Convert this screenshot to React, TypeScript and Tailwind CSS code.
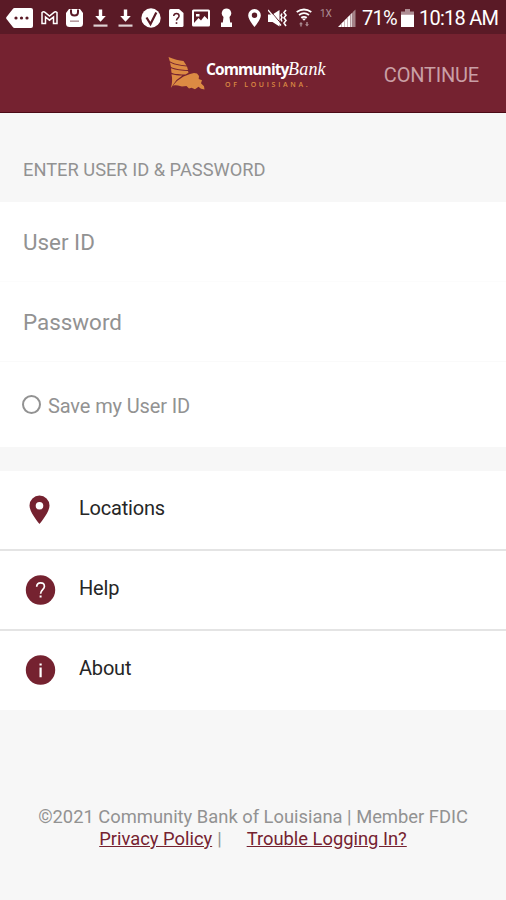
import type { ReactNode } from "react";

type GlyphProps = {
  width: number;
  className?: string;
  children: ReactNode;
};

// Every status glyph is 20px tall, only the width differs
function Glyph({ width, className = "", children }: GlyphProps) {
  return (
    <svg
      width={width}
      height={20}
      viewBox={`0 0 ${width} 20`}
      fill="#fff"
      className={`shrink-0 ${className}`}
    >
      {children}
    </svg>
  );
}

function DownloadGlyph({ className }: { className?: string }) {
  return (
    <Glyph width={15} className={className}>
      <path d="M5.8 1.5h3.4V8h3.6l-5.3 5.8L2.2 8h3.6z" />
      <path d="M.5 16.5h14v2.2H.5z" opacity=".8" />
    </Glyph>
  );
}

function StatusBar() {
  return (
    <div className="flex h-[34px] shrink-0 items-center bg-[#5a1a26] pt-px pl-1.5 text-white">
      <Glyph width={27}>
        <path d="M8.5 0H25q2 0 2 2v16q0 2-2 2H8.5q-1 0-1.7-1L.5 11q-.7-1 0-2L6.8 1Q7.5 0 8.5 0z" />
        <g fill="#5a1a26">
          <circle cx="10" cy="10" r="1.6" />
          <circle cx="15.5" cy="10" r="1.6" />
          <circle cx="21" cy="10" r="1.6" />
        </g>
      </Glyph>
      <Glyph width={17} className="ml-2">
        <path
          d="M1 4.5v11h3.5V9l4 3.2 4-3.2v6.5H16v-11q-1.5-1.3-3-.2L8.5 8 4 4.3q-1.5-1.1-3 .2z"
          fill="none"
          stroke="#fff"
          strokeWidth="1.5"
        />
      </Glyph>
      <Glyph width={17} className="ml-2">
        <path d="M3 1h11l3 4V15.5q0 3.5-3.5 3.5h-10Q0 19 0 15.5V5z" />
        <path
          d="M5 1.5V4q0 3.5 3.5 3.5T12 4V1.5"
          fill="none"
          stroke="#5a1a26"
          strokeWidth="2"
        />
        <path d="M4 12.5h9v1.3H4z" fill="#5a1a26" opacity=".55" />
      </Glyph>
      <DownloadGlyph className="ml-2.5" />
      <DownloadGlyph className="ml-2.5" />
      <Glyph width={20} className="ml-2">
        <circle cx="10" cy="10" r="9.7" />
        <path
          d="m5.5 9.5 4 6.5 5.8-11.5"
          fill="none"
          stroke="#5a1a26"
          strokeWidth="2.2"
        />
      </Glyph>
      <Glyph width={15} className="ml-2">
        <path d="M1.5 1H10l4.500 4v12.500q0 1.500-1.500 1.500H1.500Q0 19 0 17.500V2.500Q0 1 1.500 1z" />
        <path
          d="M4.700 8q.3-2.500 2.800-2.500T10.100 8c0 2-2.600 2.200-2.600 4.500"
          fill="none"
          stroke="#5a1a26"
          strokeWidth="1.5"
        />
        <path d="M6.700 14.200h1.600v1.700H6.700z" fill="#5a1a26" />
      </Glyph>
      <Glyph width={18} className="ml-2">
        <path
          fillRule="evenodd"
          d="M1.500 1.500h15Q18 1.500 18 3v14q0 1.500-1.500 1.500h-15Q0 18.500 0 17V3Q0 1.500 1.500 1.500zM2 3.500V15l4.500-5L9 12.500 12.500 8 16 11.500v-8z"
        />
        <path d="M4 6h3.500v2.500H4z" />
      </Glyph>
      <Glyph width={11} className="ml-[11px]">
        <path d="M5.500.5a4.800 4.800 0 0 1 3 8.500l.7 5.500H11V19H0v-4.500h1.800L2.500 9a4.800 4.800 0 0 1 3-8.500z" />
      </Glyph>
      <Glyph width={13} className="ml-4">
        <path
          fillRule="evenodd"
          d="M6.500 1A6.300 6.300 0 0 1 12.800 7.500c0 4-6.300 11.500-6.300 11.500S.2 11.500.2 7.500A6.300 6.300 0 0 1 6.500 1zm0 3.500a2.700 2.700 0 1 0 0 5.400 2.700 2.700 0 0 0 0-5.400z"
        />
      </Glyph>
      <Glyph width={19} className="ml-[7px]">
        <path d="M0 6.500h4.500L11.500 2v16.500l-7-4.500H0z" />
        <path d="M1 1.500 13.500 16" stroke="#5a1a26" strokeWidth="1" />
        <path d="M0 2 13 17.500" stroke="#fff" strokeWidth="1.3" />
        <path
          d="m14 5.500-1 2 1 2-1 2 1 2M18 2l-2 2.600 2 2.600-2 2.600 2 2.600-2 2.600 2 3"
          fill="none"
          stroke="#fff"
          strokeWidth="1.6"
        />
      </Glyph>
      <Glyph width={16} className="ml-[9px]">
        <g fill="none" stroke="#fff" strokeWidth="1.8">
          <path d="M.7 4q7.300-5 14.600 0" />
          <path d="M3 7q5-3.600 10 0" />
          <path d="M5.200 9.800q2.800-2 5.600 0" />
        </g>
        <path d="m5.800 10.500 2.200 2.300 2.200-2.300z" />
        <path
          d="m3 16.300 2-2.300 2 2.300H5.700v2.200H4.300v-2.200zm6 0h1.300V14h1.400v2.300H13l-2 2.200z"
          opacity=".5"
        />
      </Glyph>
      <span className="mb-2 ml-2 w-[13px] text-[10px] leading-none text-white/50">
        1X
      </span>
      <Glyph width={18} className="ml-[5px]">
        <path d="M0 19 3 16v3z" />
        <path d="M3.300 15.500 6 13v6H3.300zM6.300 12.500 9 10v9H6.300zM9.300 9.500 12 7v12H9.300z" />
        <path d="m12.300 6.500 2.200-2V19h-2.200z" opacity=".8" />
        <path d="M14.800 4l2.700-2.500V19h-2.700z" opacity=".45" />
      </Glyph>
      <span className="ml-1.5 w-[38px] text-[20px] leading-none tracking-[-0.7px]">
        71%
      </span>
      <Glyph width={13} className="ml-px">
        <path d="M4 1h5v2.500h4v3H0v-3h4z" opacity=".5" />
        <path d="M0 6.500h13V19H0z" />
      </Glyph>
      <span className="ml-[5px] text-[20px] leading-none tracking-[-0.75px] whitespace-nowrap">
        10:18 AM
      </span>
    </div>
  );
}

function BankLogo() {
  return (
    <div className="flex items-start">
      <svg width="38" height="34" viewBox="0 0 38 34" fill="#dc8a43">
        <path d="M.5 0C6 2.500 11 3.200 15.500 4l3 4.500C12 8 5 6.500 1.800 4.300z" />
        <path d="M2 5.500c5 2.500 11 3.700 17 4l1 3.500c-6 0-13-1-17-3z" />
        <path d="M3 11.300c5 2 11 2.700 17 2.700l.5 1.800-3 1.700c-5 0-11-.2-14-1.700z" />
        <path d="M3.500 17.300c4 1 7.500 1.300 11 1.200L8.500 23l-5.700 8c1.500-4 1.700-9.500.7-13.700z" />
        <path d="M4.500 29 9 24l6.500-4.500L22 17l4-1 3 .5 2 2.500-.3 3 3.300 1.200-1 3 3 3 .5 3.300-3.500-.8-2.500-2-3.500 2.500-3.500-1.500-2.500.8-2.500-2.500-4.500.5-4-1-5-.5z" />
      </svg>
      <div className="flex flex-col pt-[4px]">
        <div className="flex items-baseline leading-[17px] whitespace-nowrap text-white">
          <span className="w-[82px] font-['Open_Sans',sans-serif] text-[15.5px] font-bold tracking-[-0.9px]">
            Community
          </span>
          <span className="font-['Liberation_Serif',serif] text-[18px] tracking-[0.2px] italic">
            Bank
          </span>
        </div>
        <span className="mt-[3px] pl-[19px] font-['Open_Sans',sans-serif] text-[7px] leading-[8px] font-semibold tracking-[2.7px] whitespace-nowrap text-[#dc8a43]">
          OF LOUISIANA.
        </span>
      </div>
    </div>
  );
}

function Header() {
  return (
    <header className="flex h-[79px] shrink-0 items-start border-b border-[#4c0b16] bg-[#752230] pt-[23px] pl-[168px]">
      <BankLogo />
      <button className="mt-[6px] ml-auto mr-[27px] text-[20px] leading-[24px] tracking-[-0.2px] text-[#c99fa5]">
        CONTINUE
      </button>
    </header>
  );
}

function LoginForm() {
  return (
    <section>
      <h1 className="h-[89px] pt-[46px] pl-[23px] text-[18.3px] leading-[22px] text-[#929292]">
        ENTER USER ID &amp; PASSWORD
      </h1>
      <div className="bg-white text-[#929292]">
        <div className="flex h-20 items-center border-b border-[#fcfcfc] pt-[3px] pl-[23px] text-[22.4px]">
          User ID
        </div>
        <div className="flex h-20 items-center border-b border-[#fafafa] pt-[3px] pl-[23px] text-[22.4px]">
          Password
        </div>
        <label className="flex h-[85px] items-center pl-[22px] text-[20px] tracking-[-0.12px]">
          <span className="mr-[7px] size-[19px] rounded-full border-2 border-[#929292]" />
          <span className="pt-0.5">Save my User ID</span>
        </label>
      </div>
    </section>
  );
}

const MENU_ITEMS = [
  {
    label: "Locations",
    icon: (
      <path
        fillRule="evenodd"
        d="M14.500.5a10 10 0 0 1 10 10c0 7-10 18.500-10 18.500s-10-11.500-10-18.500a10 10 0 0 1 10-10zm0 6.500a3.800 3.800 0 1 0 0 7.600 3.800 3.800 0 0 0 0-7.600z"
      />
    ),
  },
  {
    label: "Help",
    icon: (
      <>
        <circle cx="15.5" cy="15" r="14.7" />
        <path
          d="M11.700 11.800q.1-4 3.900-4t3.800 3.600c0 3-3.800 3.600-3.800 7.400"
          fill="none"
          stroke="#fff"
          strokeWidth="1.7"
        />
        <path d="M14.600 20.500h2v2h-2z" fill="#fff" />
      </>
    ),
  },
  {
    label: "About",
    icon: (
      <>
        <circle cx="15.5" cy="15" r="14.7" />
        <path d="M14.500 8.500h2.200v2h-2.200zm0 4h2.200v9.700h-2.200z" fill="#fff" />
      </>
    ),
  },
];

function Menu() {
  return (
    <nav className="mt-6 divide-y-2 divide-[#e4e4e4] bg-white">
      {MENU_ITEMS.map(({ label, icon }) => (
        <div
          key={label}
          className="flex h-20 items-start pt-[22px] pl-[25px] last:h-[79px]"
        >
          <svg
            width="31"
            height="31"
            viewBox="0 0 31 31"
            fill="#752230"
            className="mt-0.5 shrink-0"
          >
            {icon}
          </svg>
          <span className="mt-px ml-[23px] text-[20px] leading-[28px] tracking-[-0.2px] text-[#262626]">
            {label}
          </span>
        </div>
      ))}
    </nav>
  );
}

function Footer() {
  return (
    <footer className="mt-24 text-center text-[18.35px] leading-[22px] whitespace-nowrap text-[#929292]">
      <p>©2021 Community Bank of Louisiana | Member FDIC</p>
      <p className="flex justify-center">
        <a className="text-[#752230] underline">Privacy Policy</a>
        <span className="ml-[5px] mr-[25px]">|</span>
        <a className="text-[#752230] underline">Trouble Logging In?</a>
      </p>
    </footer>
  );
}

export default function App() {
  return (
    <div className="flex h-[900px] w-[506px] flex-col overflow-hidden bg-[#f7f7f7] font-[Roboto,sans-serif]">
      <StatusBar />
      <Header />
      <LoginForm />
      <Menu />
      <Footer />
    </div>
  );
}
